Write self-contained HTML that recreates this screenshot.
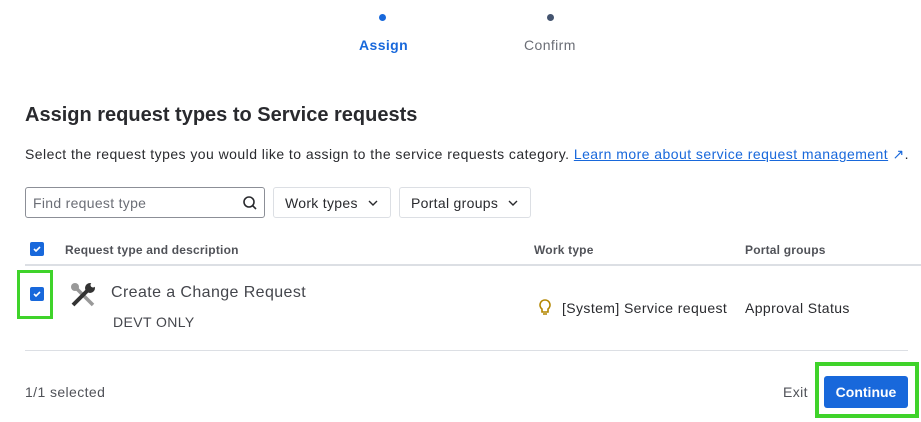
<!DOCTYPE html>
<html><head><style>
body{margin:0;width:921px;height:422px;background:#fff;font-family:"Liberation Sans",sans-serif;color:#292a2e;position:relative;overflow:hidden}
.a{position:absolute;white-space:nowrap;letter-spacing:0.4px}
.cb{position:absolute;width:14px;height:14px;background:#1868db;border-radius:2px}
.cb svg{position:absolute;left:2px;top:2px}
.btn{position:absolute;border:1px solid #dcdfe4;border-radius:3px;height:31px;font-size:14px;line-height:30px;box-sizing:border-box;padding:0 11px;letter-spacing:0.3px}
.btn svg.c{position:absolute;right:12px;top:12px}
</style></head><body>
<div class="a" style="left:379px;top:14px;width:7px;height:7px;border-radius:50%;background:#1868db"></div>
<div class="a" style="left:547px;top:14px;width:7px;height:7px;border-radius:50%;background:#44546f"></div>
<div class="a" style="left:359px;top:37px;font-size:14px;font-weight:bold;color:#1868db">Assign</div>
<div class="a" style="left:524px;top:37px;font-size:14px;color:#6b6e76">Confirm</div>
<div class="a" style="left:25px;top:104px;font-size:20px;font-weight:bold;letter-spacing:0">Assign request types to Service requests</div>
<div class="a" style="left:25px;top:146px;font-size:14px;letter-spacing:0.45px">Select the request types you would like to assign to the service requests category. <span style="color:#1868db;text-decoration:underline">Learn more about service request management</span> <span style="color:#1868db">↗</span>.</div>
<div class="btn" style="left:25px;top:187px;width:240px;border-color:#8c8f97;color:#6b6e76;padding:0 7px">Find request type
<svg style="position:absolute;right:6px;top:7px" width="16" height="16" viewBox="0 0 16 16"><circle cx="7" cy="7" r="5" fill="none" stroke="#292a2e" stroke-width="1.6"/><path d="M10.5 10.5L14 14" stroke="#292a2e" stroke-width="1.6"/></svg></div>
<div class="btn" style="left:273px;top:187px;width:118px">Work types<svg class="c" width="10" height="6"><path d="M1 1l4 4 4-4" fill="none" stroke="#292a2e" stroke-width="1.4"/></svg></div>
<div class="btn" style="left:399px;top:187px;width:132px">Portal groups<svg class="c" width="10" height="6"><path d="M1 1l4 4 4-4" fill="none" stroke="#292a2e" stroke-width="1.4"/></svg></div>
<div class="cb" style="left:30px;top:242px"><svg width="10" height="10"><path d="M2 5l2 2 4-4" stroke="#fff" stroke-width="1.6" fill="none"/></svg></div>
<div class="a" style="left:65px;top:243px;font-size:12px;font-weight:bold;color:#505258;letter-spacing:0.2px">Request type and description</div>
<div class="a" style="left:534px;top:243px;font-size:12px;font-weight:bold;color:#505258;letter-spacing:0.2px">Work type</div>
<div class="a" style="left:745px;top:243px;font-size:12px;font-weight:bold;color:#505258;letter-spacing:0.2px">Portal groups</div>
<div class="a" style="left:25px;top:264px;width:896px;height:2px;background:#dcdfe4"></div>
<div class="a" style="left:17px;top:270px;width:36px;height:49px;border:3px solid #3fd32a;box-sizing:border-box"></div>
<div class="cb" style="left:30px;top:287px"><svg width="10" height="10"><path d="M2 5l2 2 4-4" stroke="#fff" stroke-width="1.6" fill="none"/></svg></div>
<svg class="a" style="left:69px;top:281px" width="28" height="28" viewBox="0 0 28 28"><path d="M6 6L24 24" stroke="#999" stroke-width="3.5"/><circle cx="6" cy="6" r="4" fill="#999"/><path d="M4 24L20 8" stroke="#333" stroke-width="4"/><circle cx="21" cy="7" r="5" fill="#333"/><circle cx="24" cy="4" r="2.5" fill="#fff"/></svg>
<div class="a" style="left:111px;top:284px;font-size:16px;color:#44464c">Create a Change Request</div>
<div class="a" style="left:113px;top:314px;font-size:14px;color:#44464c">DEVT ONLY</div>
<svg class="a" style="left:538px;top:299px" width="14" height="18" viewBox="0 0 14 18"><path d="M7 1a5 5 0 0 0-3 9v3h6v-3a5 5 0 0 0-3-9zM5 15h4" fill="none" stroke="#b38600" stroke-width="1.6"/></svg>
<div class="a" style="left:562px;top:300px;font-size:14px">[System] Service request</div>
<div class="a" style="left:745px;top:300px;font-size:14px">Approval Status</div>
<div class="a" style="left:25px;top:350px;width:883px;height:1px;background:#dcdfe4"></div>
<div class="a" style="left:25px;top:384px;font-size:14px;color:#505258">1/1 selected</div>
<div class="a" style="left:783px;top:384px;font-size:14px;color:#505258">Exit</div>
<div class="a" style="left:815px;top:362px;width:104px;height:56px;border:4px solid #3fd32a;box-sizing:border-box"></div>
<div class="a" style="left:824px;top:376px;width:84px;height:32px;background:#1868db;border-radius:3px;color:#fff;font-size:14px;font-weight:bold;text-align:center;line-height:32px;letter-spacing:0">Continue</div>
</body></html>
